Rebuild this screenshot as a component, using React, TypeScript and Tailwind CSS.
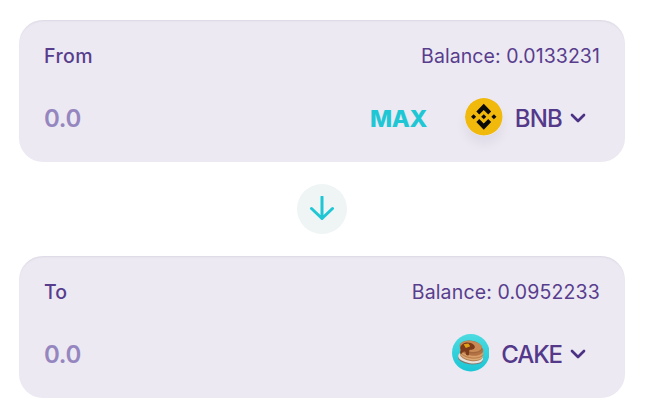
import type { ReactNode } from "react";

function Chevron() {
  return (
    <svg viewBox="0 0 16 12" className="mt-px h-3 w-4 shrink-0" fill="none" stroke="#4c3285" strokeWidth="2.7" strokeLinecap="round" strokeLinejoin="round">
      <path d="M2 3L8 9L14 3" />
    </svg>
  );
}

function BnbLogo() {
  return (
    <svg viewBox="0 0 96 96" className="size-[37.5px] shrink-0 rounded-full shadow-[0_8px_12px_rgba(25,19,38,0.06)]">
      <circle cx="48" cy="48" r="48" fill="#f0b90b" />
      <g fill="#0b0a05">
        <path d="M36.500 42L48 30.500L59.500 42L67 34.500L48 15L29 34.500Z" />
        <path d="M36.500 54L48 65.500L59.500 54L67 61.500L48 81L29 61.500Z" />
        <path d="M15.500 48L22 41.500L28.500 48L22 54.500Z" />
        <path d="M67.500 48L74 41.500L80.500 48L74 54.500Z" />
        <path d="M48 41.500L54.500 48L48 54.500L41.500 48Z" />
      </g>
    </svg>
  );
}

function CakeLogo() {
  return (
    <svg viewBox="0 0 38 38" className="size-[37.5px] shrink-0">
      <defs>
        <linearGradient id="teal" x1="0" y1="0" x2="0" y2="1">
          <stop offset="0" stopColor="#4ddbe0" />
          <stop offset="1" stopColor="#1bc6d5" />
        </linearGradient>
      </defs>
      <circle cx="19" cy="19" r="19" fill="url(#teal)" />
      <g transform="rotate(8 19 19)">
        <ellipse cx="19.500" cy="24.800" rx="12.700" ry="6" fill="#80776c" />
        <ellipse cx="19.500" cy="23.700" rx="12.700" ry="5.900" fill="#e6dfda" />
        <ellipse cx="20" cy="21.700" rx="11.600" ry="5.700" fill="#b47c4f" />
        <ellipse cx="20" cy="20.700" rx="11.600" ry="5.500" fill="#dcaa75" />
        <ellipse cx="20" cy="18.900" rx="11.800" ry="5.800" fill="#bd8050" />
        <ellipse cx="20" cy="17.800" rx="11.800" ry="5.700" fill="#d9a06a" />
        <ellipse cx="19.300" cy="15.600" rx="12" ry="6.200" fill="#b37344" />
        <ellipse cx="18.300" cy="13.200" rx="11.500" ry="6.300" fill="#a4683b" />
        <ellipse cx="18.300" cy="12.500" rx="11.100" ry="5.500" fill="#c98a55" />
      </g>
      <path d="M10.500 10.500C13 8 19 8 22 11C25 14 21.500 16.500 18.500 16C17 16 17.500 18 17.300 20.500C17 22.500 14 22 14 19.500C14 17 11.500 17.500 10 19.500C8.500 21.500 7.500 19 9 16C8 14 8.500 12 10.500 10.500Z" fill="#7b3a1b" />
      <path d="M11.800 10.500L16.500 9.500L18.500 12.300L14 14.200Z" fill="#dfa016" />
    </svg>
  );
}

type PanelProps = {
  label: ReactNode;
  balance: ReactNode;
  children: ReactNode;
};

function CurrencyPanel({ label, balance, children }: PanelProps) {
  return (
    <section className="h-[142px] w-[606px] rounded-[24px] bg-[#ece9f3] pt-[22px] pr-[25px] pl-[25px] shadow-[inset_0_2px_2px_-1px_rgba(74,74,104,0.1)]">
      <div className="flex h-[29px] items-center justify-between text-[19.5px] text-[#583d8d]">
        {label}
        {balance}
      </div>
      <div className="mt-[27px] flex h-[38px] items-center justify-between pr-[14px] text-[24px]">
        <span className="pt-[3px] font-semibold tracking-[-0.3px] text-[#9586bf]">0.0</span>
        <div className="flex items-center text-[#54398a]">{children}</div>
      </div>
    </section>
  );
}

export default function App() {
  return (
    <main className="flex h-[414px] w-[645px] flex-col items-start bg-white pt-[20px] pl-[19px] font-['Inter',sans-serif] leading-none">
      <CurrencyPanel
        label={<span className="font-medium tracking-[0.4px]">From</span>}
        balance={<span className="tracking-[0.07px]">Balance: 0.0133231</span>}
      >
        <span className="mr-[38px] pt-[3px] text-[23.5px] font-extrabold tracking-[-0.3px] text-[#1fc7d4]">MAX</span>
        <BnbLogo />
        <span className="mr-[8px] ml-[12px] pt-[3px] font-medium tracking-[-0.8px]">BNB</span>
        <Chevron />
      </CurrencyPanel>
      <div className="my-[22px] ml-[278px] flex size-[50px] items-center justify-center rounded-full bg-[#eff4f5]">
        <svg viewBox="0 0 26 26" className="size-[26px]" fill="none" stroke="#1fc7d4" strokeWidth="3" strokeLinecap="round" strokeLinejoin="round">
          <path d="M13 1V22.500M2.500 12.500L13 22.500L23.500 12.500" />
        </svg>
      </div>
      <CurrencyPanel
        label={<span className="font-medium">To</span>}
        balance={<span className="tracking-[0.15px]">Balance: 0.0952233</span>}
      >
        <CakeLogo />
        <span className="mr-[8px] ml-[12px] pt-[3px] font-medium tracking-[-1.1px]">CAKE</span>
        <Chevron />
      </CurrencyPanel>
    </main>
  );
}
